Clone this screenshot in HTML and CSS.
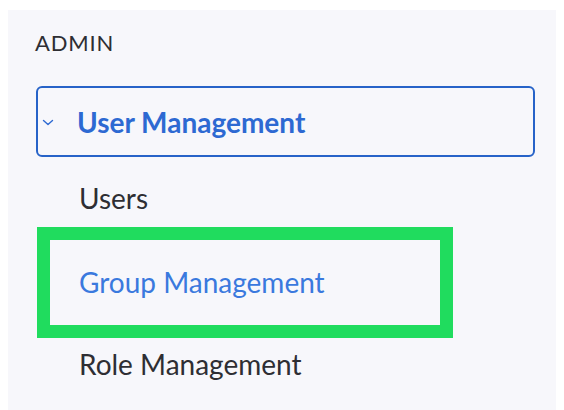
FILE: index.html
```html
<!doctype html>
<html lang="en">

<head>
    <meta charset="utf-8">
    <meta name="viewport" content="width=device-width, initial-scale=1">
    <title>Admin</title>
    <link rel="stylesheet" href="styles.css">
</head>

<body>
<nav class="sidebar">
    <div class="section-title">ADMIN</div>

    <ul class="menu">
        <li class="menu-group open">
            <button type="button" class="group-toggle">
                <svg class="chevron" width="12" height="7" viewBox="0 0 12 7" aria-hidden="true">
                    <path d="M1.5 1.5l4.5 4 4.5-4" fill="none" stroke="currentColor" stroke-width="1.4"
                          stroke-linecap="round" stroke-linejoin="round"/>
                </svg>
                <span>User Management</span>
            </button>

            <ul class="submenu">
                <li class="submenu-item"><a href="#">Users</a></li>
                <li class="submenu-item highlight"><a href="#" class="active">Group Management</a></li>
                <li class="submenu-item"><a href="#">Role Management</a></li>
            </ul>
        </li>
    </ul>
</nav>
</body>
</html>
```

FILE: styles.css
```css
:root {
    /* Colors */
    --color-page: #fff;
    --color-panel: #f7f7fb;
    --color-text: #2e2e33;
    --color-link: #2d69d2;
    --color-active: #3a79de;
    --color-focus: #2763c8;
    --color-highlight: #20dc5e;

    --font-stack: Lato, 'Open Sans', 'Helvetica Neue', sans-serif;
}

*, *::before, *::after {
    box-sizing: border-box;
}

body {
    margin: 0;
    background: var(--color-page);
    font-family: var(--font-stack);
    color: var(--color-text);
}

.sidebar {
    width: 548px;
    min-height: 400px;
    margin: 10px 0 0 8px;
    padding: 20px 21px 0 28px;
    background: var(--color-panel);
}

.section-title {
    margin-left: -1px;
    font-size: 22px;
    line-height: 26px;
    letter-spacing: 0.8px;
}

.menu,
.submenu {
    list-style: none;
    margin: 0;
    padding: 0;
}

.menu {
    margin-top: 30px;
}

.group-toggle {
    display: flex;
    align-items: center;
    width: 100%;
    height: 71px;
    padding: 0 0 0 4px;
    background: transparent;
    border: 2px solid var(--color-focus);
    border-radius: 6px;
    font-family: inherit;
    font-size: 28px;
    font-weight: 700;
    color: var(--color-link);
    cursor: pointer;
}

.chevron {
    flex: none;
    margin: 1px 23px 0 0;
}

.submenu {
    display: flex;
    flex-direction: column;
    padding-top: 27px;
}

.submenu-item a {
    display: block;
    font-size: 28px;
    line-height: 28px;
    color: var(--color-text);
    text-decoration: none;
}

.submenu-item {
    padding-left: 43px;
}

.submenu-item.highlight {
    width: 416px;
    margin: 15px 0 12px 1px;
    padding: 28px 0 29px 29px;
    border: 13px solid var(--color-highlight);
}

.submenu-item a.active {
    color: var(--color-active);
}
```
